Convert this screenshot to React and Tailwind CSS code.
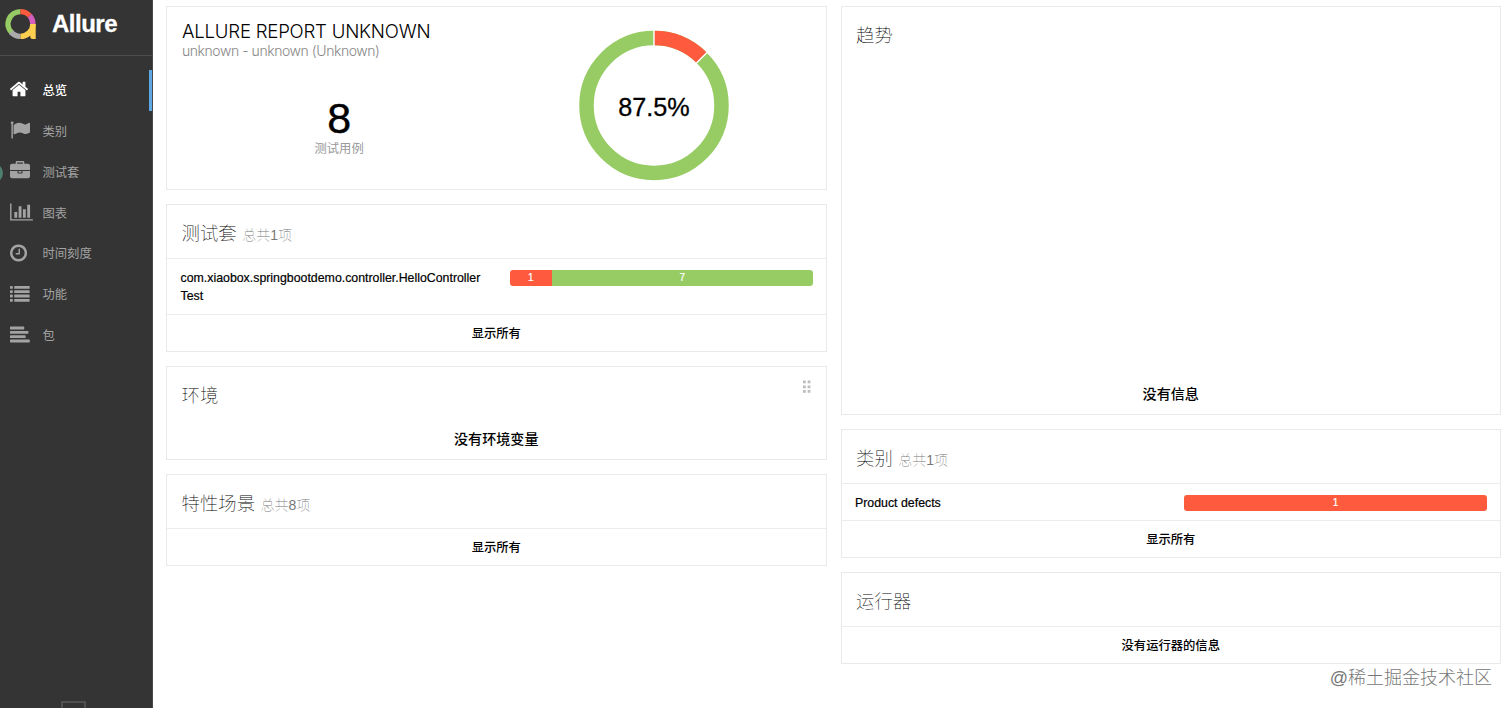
const NAV_ITEMS = [
  { label: '总览', icon: HomeIcon, active: true },
  { label: '类别', icon: FlagIcon },
  { label: '测试套', icon: BriefcaseIcon },
  { label: '图表', icon: ChartIcon },
  { label: '时间刻度', icon: ClockIcon },
  { label: '功能', icon: ListIcon },
  { label: '包', icon: AlignIcon },
];

function HomeIcon() {
  return (
    <svg viewBox="0 0 1792 1792" className="h-[20px] w-[20px] -ml-px" fill="currentColor">
      <path d="M1472 992v480q0 26-19 45t-45 19h-384v-384h-256v384h-384q-26 0-45-19t-19-45v-480q0-1 .5-3t.5-3l575-474 575 474q1 2 1 6zm223-69l-62 74q-8 9-21 11h-3q-13 0-21-7l-692-577-692 577q-12 8-24 7-13-2-21-11l-62-74q-8-10-7-23.5t11-21.5l719-599q32-26 76-26t76 26l244 204v-195q0-14 9-23t23-9h192q14 0 23 9t9 23v408l219 182q10 8 11 21.5t-7 23.5z" />
    </svg>
  );
}

function FlagIcon() {
  return (
    <svg viewBox="0 0 1792 1792" className="h-[20px] w-[20px]" fill="currentColor">
      <path d="M320 256q0 72-64 110v1266q0 13-9.5 22.5t-22.5 9.5h-64q-13 0-22.5-9.5t-9.5-22.5v-1266q-64-38-64-110 0-53 37.5-90.5t90.5-37.5 90.5 37.5 37.5 90.5zm1472 64v763q0 25-12.5 38.5t-39.5 27.5q-215 116-369 116-61 0-123.5-22t-108.5-48-115.5-48-142.5-22q-192 0-464 146-17 9-33 9-26 0-45-19t-19-45v-742q0-32 31-55 21-14 79-43 236-120 421-120 107 0 200 29t219 88q38 19 88 19 54 0 117.5-21t110-47 88-47 54.5-21q26 0 45 19t19 45z" />
    </svg>
  );
}

function BriefcaseIcon() {
  return (
    <svg viewBox="0 0 1792 1792" className="h-[20px] w-[20px]" fill="currentColor">
      <path d="M640 256h512v-128h-512v128zm1152 640v480q0 66-47 113t-113 47h-1472q-66 0-113-47t-47-113v-480h672v160q0 26 19 45t45 19h320q26 0 45-19t19-45v-160h672zm-768 0v128h-256v-128h256zm768-480v384h-1792v-384q0-66 47-113t113-47h352v-160q0-40 28-68t68-28h576q40 0 68 28t28 68v160h352q66 0 113 47t47 113z" />
    </svg>
  );
}

function ChartIcon() {
  return (
    <svg viewBox="0 0 2048 1792" className="h-[20px] w-[23px]" fill="currentColor">
      <path d="M640 896v512h-256v-512h256zm384-512v1024h-256v-1024h256zm1024 1152v128h-2048v-1536h128v1408h1920zm-640-896v768h-256v-768h256zm384-384v1152h-256v-1152h256z" />
    </svg>
  );
}

function ClockIcon() {
  return (
    <svg viewBox="128 0 1664 1792" className="h-[20px] w-[18.5px]" fill="currentColor">
      <path d="M1024 544v448q0 14-9 23t-23 9h-320q-14 0-23-9t-9-23v-64q0-14 9-23t23-9h224v-352q0-14 9-23t23-9h64q14 0 23 9t9 23zm416 352q0-148-73-273t-198-198-273-73-273 73-198 198-73 273 73 273 198 198 273 73 273-73 198-198 73-273zm224 0q0 209-103 385.5t-279.5 279.5-385.5 103-385.5-103-279.5-279.5-103-385.5 103-385.5 279.5-279.5 385.5-103 385.5 103 279.5 279.5 103 385.5z" />
    </svg>
  );
}

function ListIcon() {
  return (
    <svg viewBox="0 0 20 20" className="h-[20px] w-[20px]" fill="currentColor">
      {[2, 6.3, 10.6, 14.9].map((y) => (
        <g key={y}>
          <rect x="0" y={y} width="2.8" height="2.8" rx="0.4" />
          <rect x="4.2" y={y} width="15.4" height="2.8" rx="0.4" />
        </g>
      ))}
    </svg>
  );
}

function AlignIcon() {
  return (
    <svg viewBox="0 0 20 20" className="h-[20px] w-[20px]" fill="currentColor">
      <rect x="0" y="1.6" width="14.2" height="2.9" rx="0.6" />
      <rect x="0" y="5.9" width="18.4" height="2.9" rx="0.6" />
      <rect x="0" y="10.2" width="15.6" height="2.9" rx="0.6" />
      <rect x="0" y="14.5" width="19.8" height="2.9" rx="0.6" />
    </svg>
  );
}

function Logo() {
  return (
    <svg viewBox="0 0 32 32" className="h-8 w-8" fill="none" strokeWidth="5.4">
      <path d="M7 25.1A12.4 12.4 0 0 1 15.5 3.6" stroke="#97cc64" />
      <path d="M15.5 3.6A12.4 12.4 0 0 1 24.8 7.8" stroke="#fd5a3e" />
      <path d="M24.8 7.8A12.4 12.4 0 0 1 27.9 16" stroke="#d35ebe" />
      <path d="M15.5 28.4A12.4 12.4 0 0 1 6 24" stroke="#aaaaaa" />
      <path d="M15.5 28.4A12.4 12.4 0 0 0 27.9 16" stroke="#ffd050" />
      <path d="M25.2 16H30.7V31H27.5Q25.2 31 25.2 28Z" fill="#ffd050" />
    </svg>
  );
}

function Sidebar() {
  return (
    <aside className="relative flex w-[153px] shrink-0 flex-col overflow-hidden border-r border-[#484848] bg-[#343434]">
      <div className="flex h-14 items-start border-b border-[#4c4c4c] pt-2 pl-[5px]">
        <Logo />
        <span className="ml-[15px] text-[24px] leading-8 font-bold tracking-[-0.5px] text-white [-webkit-text-stroke:0.3px_white]">
          Allure
        </span>
      </div>
      <nav className="mt-[14px] flex flex-col">
        {NAV_ITEMS.map(({ label, icon: Icon, active }) => (
          <a
            key={label}
            className={`flex h-[40.9px] items-center pl-[10px] text-[12.3px] ${
              active ? 'border-r-[3px] border-[#5fa8e6] font-medium text-white' : 'text-[#a3a3a3]'
            }`}
          >
            <span className="flex w-[32.5px] shrink-0 pb-[2px]">
              <Icon />
            </span>
            <span className="pt-[1.4px]">{label}</span>
          </a>
        ))}
      </nav>
      <div className="absolute top-[163px] -left-[17px] h-5 w-5 rounded-full bg-[#4f7f6d]" />
      <div className="absolute -bottom-1 left-[61px] h-[11px] w-[25px] border-2 border-[#505050]" />
    </aside>
  );
}

function Card({ className = '', children }) {
  return <section className={`flex flex-col border border-[#e9e9e9] bg-white ${className}`}>{children}</section>;
}

function CardTitle({ title, sub }) {
  return (
    <h2 className="flex h-[53px] shrink-0 items-baseline pt-[14.5px] pl-[14.5px] text-[18.4px] leading-[27px] font-thin text-black">
      {title}
      {sub && <small className="ml-[5.5px] text-[14px] text-[#777]">{sub}</small>}
    </h2>
  );
}

function ShowAll({ children = '显示所有' }) {
  return (
    <a className="flex flex-1 items-center justify-center border-t border-[#ececec] pt-[2px] text-[12.3px] font-medium">
      {children}
    </a>
  );
}

function StatusRow({ name, failed = 0, passed = 0, className }) {
  return (
    <div className={`flex shrink-0 border-t border-[#ececec] pr-[13px] pl-[13.5px] ${className}`}>
      <div className="w-[304px] pt-[10px] text-[12.35px] leading-[18px] break-all [-webkit-text-stroke:0.2px_black]">{name}</div>
      <div className="mt-[11px] ml-auto flex h-4 w-[303px] overflow-hidden rounded-[3px] text-[10px] leading-4 text-white [-webkit-text-stroke:0.2px_white]">
        {failed > 0 && (
          <div
            className="bg-[#fd5a3e] text-center"
            style={{ width: passed ? `${(failed / (failed + passed)) * 112}%` : '100%' }}
          >
            {failed}
          </div>
        )}
        {passed > 0 && <div className="flex-1 bg-[#97cc64] text-center">{passed}</div>}
      </div>
    </div>
  );
}

function Donut() {
  return (
    <svg viewBox="-75 -75.5 150 151" className="h-[151px] w-[150px]">
      <circle r="67.5" fill="none" stroke="#97cc64" strokeWidth="14.5" />
      <path d="M0 -67.5A67.5 67.5 0 0 1 47.73 -47.73" fill="none" stroke="#fd5a3e" strokeWidth="14.5" />
      <path d="M0 -76V-59M54 -54L41.5 -41.5" stroke="#fff" strokeWidth="1.4" />
      <text y="10" textAnchor="middle" fontSize="25.2" fill="#000" stroke="#000" strokeWidth="0.3">
        87.5%
      </text>
    </svg>
  );
}

function Summary() {
  return (
    <Card className="h-[184px]">
      <div className="flex">
        <div className="w-1/2 pl-[15px]">
          <h2 className="mt-[12px] font-['Inter',sans-serif] text-[18.6px] leading-6 font-light tracking-[-0.22px] whitespace-nowrap text-black">
            ALLURE REPORT UNKNOWN
          </h2>
          <div className="font-['Inter',sans-serif] text-[14px] leading-[15px] font-light tracking-[-0.44px] text-[#888]">
            unknown - unknown (Unknown)
          </div>
          <div className="mt-[37px] flex flex-col items-center">
            <div className="text-[43px] leading-[46px] [-webkit-text-stroke:0.4px_black]">8</div>
            <div className="text-[12.3px] leading-4 text-[#999]">测试用例</div>
          </div>
        </div>
        <div className="flex w-1/2 justify-center pt-[23px] pr-[14px]">
          <Donut />
        </div>
      </div>
    </Card>
  );
}

function DragHandle() {
  return (
    <svg viewBox="0 0 8 14" className="absolute top-[13px] right-[15px] h-[14px] w-2" fill="#bdbdbd">
      {[0.5, 5.5, 10].map((y) => (
        <g key={y}>
          <rect x="0" y={y} width="2.8" height="2.8" />
          <rect x="4.6" y={y} width="2.8" height="2.8" />
        </g>
      ))}
    </svg>
  );
}

export default function App() {
  return (
    <div className="relative flex h-[708px] w-[1512px] overflow-hidden bg-white font-['Liberation_Sans','Noto_Sans_CJK_SC',sans-serif] text-black">
      <Sidebar />
      <main className="flex flex-1 gap-[14px] pt-[6px] pr-[11px] pl-[13px]">
        <div className="flex flex-1 flex-col gap-[14px]">
          <Summary />
          <Card className="h-[148px]">
            <CardTitle title="测试套" sub="总共1项" />
            <StatusRow
              name="com.xiaobox.springbootdemo.controller.HelloControllerTest"
              failed={1}
              passed={7}
              className="h-[56px]"
            />
            <ShowAll />
          </Card>
          <Card className="relative h-[94px]">
            <CardTitle title="环境" />
            <DragHandle />
            <div className="mt-[9px] text-center text-[14.1px] leading-5 font-medium">没有环境变量</div>
          </Card>
          <Card className="h-[92px]">
            <CardTitle title="特性场景" sub="总共8项" />
            <ShowAll />
          </Card>
        </div>
        <div className="flex flex-1 flex-col gap-[14px]">
          <Card className="h-[409px] justify-between">
            <CardTitle title="趋势" />
            <div className="pb-[10px] text-center text-[14.1px] leading-5 font-medium">没有信息</div>
          </Card>
          <Card className="h-[129px]">
            <CardTitle title="类别" sub="总共1项" />
            <StatusRow name="Product defects" failed={1} className="h-[37px]" />
            <ShowAll />
          </Card>
          <Card className="h-[92px]">
            <CardTitle title="运行器" />
            <ShowAll>没有运行器的信息</ShowAll>
          </Card>
        </div>
      </main>
      <div className="absolute right-5 bottom-[18px] text-[18px] leading-6 font-light text-[#777]">
        @稀土掘金技术社区
      </div>
    </div>
  );
}
